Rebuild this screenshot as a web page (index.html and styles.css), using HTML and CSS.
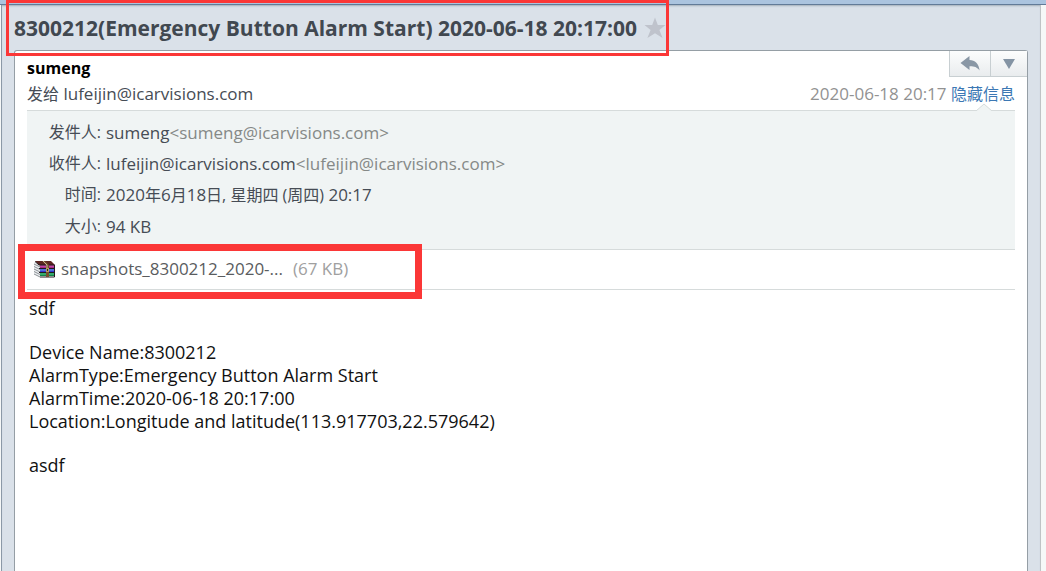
FILE: index.html
```
<!doctype html>
<html lang="zh-CN">
<head>
<meta charset="UTF-8">
<title>8300212(Emergency Button Alarm Start)</title>
<link rel="stylesheet" href="styles.css">
</head>
<body>
	<div class="topbar"></div>
	<div class="main">
		<div class="pane">
			<div class="subject">
				<h1>8300212(Emergency Button Alarm Start) 2020-06-18 20:17:00</h1>
				<button class="star" aria-label="星标">
					<svg width="22" height="22" viewBox="0 0 22 22"><path d="M11 0.5L13.8 8H21.5L15.4 12.9L18.6 21L11 16.2L3.4 21L6.6 12.9L0.5 8H8.2Z" fill="#bfc3cc"/></svg>
				</button>
				<div class="mark mark_title"></div>
			</div>
			<div class="mail">
				<div class="tools">
					<button aria-label="回复">
						<svg width="20" height="16" viewBox="0 0 20 16"><path d="M0.5 7L9.5 0V4C15 4 19 8 19.6 14.5C17 11 14 10.2 9.5 10.3V14Z" fill="#8997a5"/></svg>
					</button>
					<button aria-label="更多">
						<svg width="14" height="12" viewBox="0 0 14 12"><path d="M1 1H13L7 11Z" fill="#8494a4"/></svg>
					</button>
				</div>
				<div class="sender">sumeng</div>
				<div class="to_row">
					<span><span class="cn">发给</span> lufeijin@icarvisions.com</span>
					<span class="date">2020-06-18 20:17 <a class="cn" href="#info">隐藏信息</a></span>
				</div>
				<div class="info" id="info">
					<svg class="arrow" width="16" height="8" viewBox="0 0 16 8"><path d="M0 8L8 1L16 8" fill="#f0f4f4" stroke="#d6dbdb"/></svg>
					<dl>
						<dt class="cn">发件人:</dt><dd>sumeng<span class="addr">&lt;sumeng@icarvisions.com&gt;</span></dd>
						<dt class="cn">收件人:</dt><dd>lufeijin@icarvisions.com<span class="addr">&lt;lufeijin@icarvisions.com&gt;</span></dd>
						<dt class="cn">时间:</dt><dd>2020<span class="cn">年</span>6<span class="cn">月</span>18<span class="cn">日, 星期四 (周四)</span> 20:17</dd>
						<dt class="cn">大小:</dt><dd>94 KB</dd>
					</dl>
				</div>
				<div class="attach">
					<svg width="21" height="17" viewBox="0 0 21 17">
						<path d="M0 1L6 4V16L0 13Z" fill="#eceef0"/>
						<path d="M0 3L6 6M0 5.5L6 8.5M0 8L6 11M0 10.5L6 13.5M0 13L6 16" stroke="#70777c" stroke-width="0.8"/>
						<path d="M1 0H17L21 4H5Z" fill="#5c2522"/>
						<path d="M6 4H20V7H6Z" fill="#a8278c"/>
						<path d="M6 8H20V11H6Z" fill="#3335c8"/>
						<path d="M6 12H20V15H6Z" fill="#128447"/>
						<path d="M6 5H20" stroke="#dc68bd"/>
						<path d="M6 9H20" stroke="#69a8ee"/>
						<path d="M6 13H20" stroke="#55d292"/>
						<path d="M1 0.5L5 4H20.5V16H6M5 7.5H20M5 11.5H20" stroke="#20191e" fill="none"/>
						<path d="M8 0H11L15 4V16H12V4Z" fill="#77502f"/>
						<path d="M9 0L13 4V7" stroke="#c8b594" fill="none"/>
						<path d="M12 7H15V11H12Z" fill="#b59b61"/>
						<path d="M13 8H14V10H13Z" fill="#32251b"/>
					</svg>
					<a href="#attachment">snapshots_8300212_2020-...</a>
					<span>(67 KB)</span>
					<div class="mark mark_attach"></div>
				</div>
				<div class="content">
					<p>sdf</p>
					<p>Device Name:8300212<br>
					AlarmType:Emergency Button Alarm Start<br>
					AlarmTime:2020-06-18 20:17:00<br>
					Location:Longitude and latitude(113.917703,22.579642)</p>
					<p>asdf</p>
				</div>
			</div>
		</div>
	</div>
</body>
</html>
```
FILE: styles.css
```
*{
	box-sizing:border-box;
}
body{
	margin:0;
	min-height:100vh;
	display:flex;
	flex-direction:column;
	background:#f6f8f8;
	color:#464c55;
	font-family:"Open Sans","Noto Sans CJK SC",sans-serif;
	font-size:17px;
	line-height:24px;
}
a{
	text-decoration:none;
}
button{
	padding:0;
	border:0;
	background:none;
}
svg{
	display:block;
}
.cn{
	font-size:16px;
}
.topbar{
	height:5px;
	background:#abc4df;
	border-bottom:1px solid #627b98;
}
.main{
	flex:1;
	display:flex;
	padding:0 5px 0 1px;
}
.pane{
	flex:1;
	display:flex;
	flex-direction:column;
	padding:0 12px;
	background:#dae1e9;
	border-left:1px solid #8c99a7;
	border-right:1px solid #bfc3c5;
	box-shadow:inset 0 2px 2px -1px #a5afba;
}
.subject{
	position:relative;
	height:45px;
	display:flex;
	align-items:center;
	gap:7px;
}
.subject h1{
	margin:0;
	font-size:21px;
	color:#414850;
	white-space:nowrap;
}
/* red highlight frames */
.mark{
	position:absolute;
	z-index:1;
	pointer-events:none;
}
.mark_title{
	top:-5px;
	left:-8px;
	width:663px;
	height:56px;
	border:3px solid #fb3737;
}
.mark_attach{
	top:-6px;
	left:-9px;
	width:404px;
	height:55px;
	border:7px solid #fb3737;
}
.mail{
	position:relative;
	flex:1;
	padding:5px 12px 0;
	background:#fff;
	border:1px solid #959ea5;
	border-bottom:0;
	border-radius:3px 3px 0 0;
}
.tools{
	position:absolute;
	top:0;
	right:0;
	display:flex;
}
.tools button{
	display:flex;
	align-items:center;
	justify-content:center;
	width:41px;
	height:26px;
	background:linear-gradient(#fcfdfd,#e9ecee);
	border-left:1px solid #c8cfd2;
	border-bottom:1px solid #c8cfd2;
}
.tools button:last-child{
	width:37px;
}
.sender{
	color:#000;
	font-size:16px;
	font-weight:bold;
}
.to_row{
	display:flex;
	justify-content:space-between;
	height:30px;
	padding-top:2px;
}
.date{
	color:#929292;
}
.date a{
	color:#3c78b4;
}
.info{
	position:relative;
	padding:6px 0 7px;
	background:#f0f4f4;
	border-top:1px solid #d6dbdb;
}
.arrow{
	position:absolute;
	top:-8px;
	right:23px;
}
dl{
	display:grid;
	grid-template-columns:74px 1fr;
	column-gap:5px;
	margin:0;
	line-height:31px;
}
dt{
	text-align:right;
}
dd{
	margin:0;
}
.addr{
	color:#858987;
}
.attach{
	position:relative;
	display:flex;
	align-items:center;
	height:41px;
	padding:0 0 1px 7px;
	border-top:1px solid #d6dbdb;
	border-bottom:1px solid #d6dbdb;
}
.attach a{
	margin:0 10px 0 6px;
	color:#5a5c5e;
}
.attach span{
	color:#a0a0a0;
}
.content{
	padding:7px 2px;
	color:#111;
	font-size:18px;
	line-height:23px;
}
.content p{
	margin:0 0 21px;
}
```
